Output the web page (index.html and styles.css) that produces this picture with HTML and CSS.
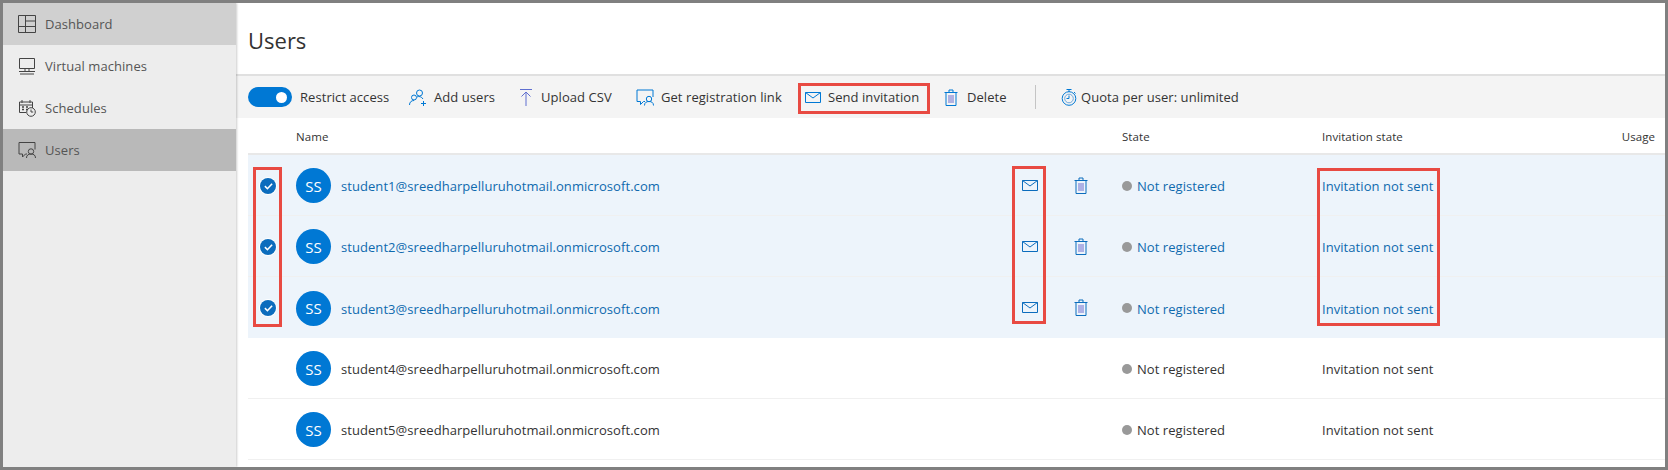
FILE: index.html
```html
<!DOCTYPE html>
<html lang="en">
<head>
    <meta charset="UTF-8">
    <meta name="viewport" content="width=device-width, initial-scale=1.0">
    <title>Users</title>
    <link rel="stylesheet" href="styles.css">
</head>
<body>
    <svg class="defs" width="0" height="0">
        <symbol id="i-mail" viewBox="0 0 16 11"><path d="M.5.5h15v10H.5zM.5.5 8 6 15.500.5" fill="none" stroke="currentColor"/></symbol>
        <symbol id="i-trash" viewBox="0 0 14 17"><path d="M.5 3.500h13M5 3.500V1h4v2.500M2 3.500v13h10v-13" fill="none" stroke="currentColor"/><path d="M5 6v8M7 6v8M9 6v8" fill="none" stroke="#6f6fcf"/></symbol>
        <symbol id="i-chat" viewBox="0 0 18 17"><path d="M4.500 12.500H1V1h16v7M4.500 12.500v3l3-3h1.500" fill="none" stroke="currentColor"/><circle cx="13" cy="10" r="2.700" fill="none" stroke="currentColor"/><path d="M8.500 16.500c0-3 2-4 4.500-4s4.500 1 4.500 4" fill="none" stroke="currentColor"/></symbol>
    </svg>

    <div class="sidebar">
        <a class="nav-item active-light">
            <svg class="nav-icon" viewBox="0 0 18 18"><path d="M.5.500h17v17H.5zM.5 11.500h17M7.500.500v17M7.500 6h10" fill="none" stroke="currentColor"/></svg>
            Dashboard
        </a>
        <a class="nav-item">
            <svg class="nav-icon" viewBox="0 0 18 18"><path d="M1.500 1.500h15v10h-15zM7 11.500v2.500M11 11.500v2.500M1 14.500h16M2 17h14" fill="none" stroke="currentColor"/></svg>
            Virtual machines
        </a>
        <a class="nav-item">
            <svg class="nav-icon" viewBox="0 0 18 18"><path d="M8 13.500H1.500V3h13v6M1.500 6h13M4 1v3M12 1v3" fill="none" stroke="currentColor"/><path d="M4 8h2M8 8h2M4 10.500h2M8 10.500h2" stroke="currentColor" stroke-width="1.300"/><circle cx="13" cy="13" r="4.300" fill="none" stroke="currentColor"/><path d="M13 10.500V13h2.200" fill="none" stroke="currentColor"/></svg>
            Schedules
        </a>
        <a class="nav-item active">
            <svg class="nav-icon"><use href="#i-chat"/></svg>
            Users
        </a>
    </div>

    <div class="main">
        <div class="page-head"><h1>Users</h1></div>

        <div class="toolbar">
            <div class="tool tool-toggle"><span class="toggle"><span class="knob"></span></span>Restrict access</div>
            <div class="tool tool-add">
                <svg class="tool-icon" viewBox="0 0 18 17"><circle cx="10.500" cy="4" r="3" fill="none" stroke="#0078d4"/><circle cx="5" cy="8.500" r="2.500" fill="none" stroke="#0078d4"/><path d="M.5 16c0-3 2-4.500 4.500-4.500M8 8c2-1 4.500-.5 6 2" fill="none" stroke="#0078d4"/><path d="M12 14.500h5M14.500 12v5" stroke="#0078d4"/></svg>
                Add users
            </div>
            <div class="tool tool-upload">
                <svg class="tool-icon narrow" viewBox="0 0 12 17"><path d="M0 .5h12M6 3v14M1.500 7.500 6 3l4.500 4.500" fill="none" stroke="#5f6fd0"/></svg>
                Upload CSV
            </div>
            <div class="tool tool-link">
                <svg class="tool-icon"><use href="#i-chat"/></svg>
                Get registration link
            </div>
            <div class="tool tool-send">
                <svg class="tool-icon mail"><use href="#i-mail"/></svg>
                Send invitation
            </div>
            <div class="tool tool-delete">
                <svg class="tool-icon trash"><use href="#i-trash"/></svg>
                Delete
            </div>
            <span class="tool-sep"></span>
            <div class="tool tool-quota">
                <svg class="tool-icon quota" viewBox="0 0 16 17"><circle cx="8" cy="9.500" r="6.800" fill="none" stroke="#0078d4"/><circle cx="8" cy="9.500" r="4.300" fill="none" stroke="#6fa8dc"/><path d="M5.500.5h5M8 .5v2.500M8 6.500v3h-2.500M13 3l1.500 1.500" fill="none" stroke="#0078d4"/></svg>
                Quota per user: unlimited
            </div>
        </div>

        <div class="table">
            <div class="row head">
                <span></span>
                <span>Name</span>
                <span></span>
                <span></span>
                <span>State</span>
                <span>Invitation state</span>
                <span class="usage">Usage</span>
            </div>

            <div class="row user selected">
                <span class="check"><svg viewBox="0 0 10 8"><path d="M1 4.200 3.800 7 9 1.500" fill="none" stroke="#fff" stroke-width="1.800"/></svg></span>
                <span class="name"><span class="avatar">SS</span>student1@sreedharpelluruhotmail.onmicrosoft.com</span>
                <svg class="row-mail"><use href="#i-mail"/></svg>
                <svg class="row-trash"><use href="#i-trash"/></svg>
                <span class="state"><i class="dot"></i>Not registered</span>
                <span>Invitation not sent</span>
                <span></span>
            </div>
            <div class="row user selected">
                <span class="check"><svg viewBox="0 0 10 8"><path d="M1 4.200 3.800 7 9 1.500" fill="none" stroke="#fff" stroke-width="1.800"/></svg></span>
                <span class="name"><span class="avatar">SS</span>student2@sreedharpelluruhotmail.onmicrosoft.com</span>
                <svg class="row-mail"><use href="#i-mail"/></svg>
                <svg class="row-trash"><use href="#i-trash"/></svg>
                <span class="state"><i class="dot"></i>Not registered</span>
                <span>Invitation not sent</span>
                <span></span>
            </div>
            <div class="row user selected last-selected">
                <span class="check"><svg viewBox="0 0 10 8"><path d="M1 4.200 3.800 7 9 1.500" fill="none" stroke="#fff" stroke-width="1.800"/></svg></span>
                <span class="name"><span class="avatar">SS</span>student3@sreedharpelluruhotmail.onmicrosoft.com</span>
                <svg class="row-mail"><use href="#i-mail"/></svg>
                <svg class="row-trash"><use href="#i-trash"/></svg>
                <span class="state"><i class="dot"></i>Not registered</span>
                <span>Invitation not sent</span>
                <span></span>
            </div>
            <div class="row user">
                <span></span>
                <span class="name"><span class="avatar">SS</span>student4@sreedharpelluruhotmail.onmicrosoft.com</span>
                <span></span>
                <span></span>
                <span class="state"><i class="dot"></i>Not registered</span>
                <span>Invitation not sent</span>
                <span></span>
            </div>
            <div class="row user">
                <span></span>
                <span class="name"><span class="avatar">SS</span>student5@sreedharpelluruhotmail.onmicrosoft.com</span>
                <span></span>
                <span></span>
                <span class="state"><i class="dot"></i>Not registered</span>
                <span>Invitation not sent</span>
                <span></span>
            </div>
        </div>
    </div>

    <!-- red callouts drawn on top of the screenshot -->
    <div class="callout callout-send"></div>
    <div class="callout callout-check"></div>
    <div class="callout callout-mail"></div>
    <div class="callout callout-invite"></div>
</body>
</html>
```

FILE: styles.css
```css
html, body {
    height: 100%;
}
body {
    font-family: 'Open Sans', 'Noto Sans', sans-serif;
    font-size: 13px;
    letter-spacing: 0.06px;
    color: #333;
    background-color: #fff;
    display: flex;
    height: 470px;
    margin: 0;
    border: 3px solid #808080;
    box-sizing: border-box;
    overflow: hidden;
    position: relative;
}
.defs {
    position: absolute;
}

/* sidebar */
.sidebar {
    width: 233px;
    flex-shrink: 0;
    background-color: #ededed;
    box-shadow: 1px 0 2px rgba(0, 0, 0, 0.2);
    position: relative;
}
.nav-item {
    display: flex;
    align-items: center;
    height: 42px;
    padding-left: 15px;
    color: #555;
    box-sizing: border-box;
}
.nav-item.active-light {
    background-color: #d0d0d0;
}
.nav-item.active {
    background-color: #b9b9b9;
}
.nav-icon {
    width: 18px;
    height: 18px;
    margin-right: 9px;
    color: #444;
    flex-shrink: 0;
}

/* main */
.main {
    flex: 1;
    min-width: 0;
}
.page-head {
    height: 73px;
    border-bottom: 2px solid #e0e0e0;
    box-sizing: border-box;
    padding: 22px 0 0 12px;
}
h1 {
    margin: 0;
    font-size: 22px;
    font-weight: 400;
    line-height: 30px;
    letter-spacing: 0;
    color: #333;
}

.toolbar {
    display: flex;
    align-items: center;
    height: 42px;
    padding-left: 12px;
    background-color: #f4f4f4;
}
.tool {
    display: flex;
    align-items: center;
    color: #333;
    white-space: nowrap;
}
.tool-toggle { width: 161px; }
.tool-add { width: 111px; }
.tool-upload { width: 116px; }
.tool-link { width: 169px; }
.tool-send { width: 139px; }
.tool-delete { width: 91px; }
.tool-quota { margin-left: 25px; }
.toggle {
    width: 44px;
    height: 20px;
    border-radius: 10px;
    background-color: #0078d4;
    margin-right: 8px;
    display: flex;
    align-items: center;
    justify-content: flex-end;
    padding-right: 5px;
    box-sizing: border-box;
}
.knob {
    width: 11px;
    height: 11px;
    border-radius: 50%;
    background-color: #fff;
}
.tool-icon {
    width: 18px;
    height: 17px;
    margin-right: 7px;
    color: #0078d4;
    flex-shrink: 0;
}
.tool-icon.narrow {
    width: 12px;
    margin-right: 9px;
}
.tool-icon.mail {
    width: 16px;
    height: 11px;
}
.tool-icon.trash {
    width: 14px;
    height: 17px;
    margin-right: 9px;
}
.tool-icon.quota {
    width: 16px;
    margin-right: 4px;
}
.tool-sep {
    width: 1px;
    height: 24px;
    background-color: #c4c4c4;
}

/* table */
.table {
    margin-left: 12px;
}
.row {
    display: grid;
    grid-template-columns: 48px 726px 52px 48px 200px 1fr 80px;
    align-items: center;
    padding-right: 10px;
}
.row.head {
    height: 37px;
    padding-top: 2px;
    font-size: 11.5px;
    border-bottom: 2px solid #e8e8e8;
    box-sizing: border-box;
}
.usage {
    text-align: right;
}
.row.user {
    height: 61px;
    padding-top: 2px;
    border-bottom: 1px solid #f0f0f0;
    box-sizing: border-box;
}
.row.selected {
    background-color: #edf4fb;
    color: #0f6aae;
}
.row.last-selected {
    border-bottom: none;
}
.check {
    width: 16px;
    height: 16px;
    margin-left: 12px;
    margin-top: -1px;
    border-radius: 50%;
    background-color: #0b6cbd;
    display: flex;
    align-items: center;
    justify-content: center;
    box-shadow: 0 0 0 1px #fff;
}
.check svg {
    width: 9px;
    height: 8px;
}
.name {
    display: flex;
    align-items: center;
}
.avatar {
    width: 35px;
    height: 35px;
    margin-top: -1px;
    border-radius: 50%;
    background-color: #0078d4;
    color: #fff;
    font-size: 15px;
    letter-spacing: 0;
    display: flex;
    align-items: center;
    justify-content: center;
    margin-right: 10px;
}
.row-mail {
    width: 16px;
    height: 11px;
    color: #0b6cbd;
    margin-top: -2px;
}
.row-trash {
    width: 14px;
    height: 17px;
    color: #0b6cbd;
    margin-top: -2px;
}
.state {
    display: flex;
    align-items: center;
}
.dot {
    width: 10px;
    height: 10px;
    border-radius: 50%;
    background-color: #999;
    margin-right: 5px;
    margin-top: -1px;
}

/* red callouts */
.callout {
    position: absolute;
    border: 3px solid #e84a42;
    box-sizing: border-box;
}
.callout-send {
    left: 795px;
    top: 80px;
    width: 132px;
    height: 31px;
}
.callout-check {
    left: 250px;
    top: 164px;
    width: 29px;
    height: 160px;
}
.callout-mail {
    left: 1009px;
    top: 163px;
    width: 34px;
    height: 158px;
}
.callout-invite {
    left: 1314px;
    top: 165px;
    width: 123px;
    height: 158px;
}
```
